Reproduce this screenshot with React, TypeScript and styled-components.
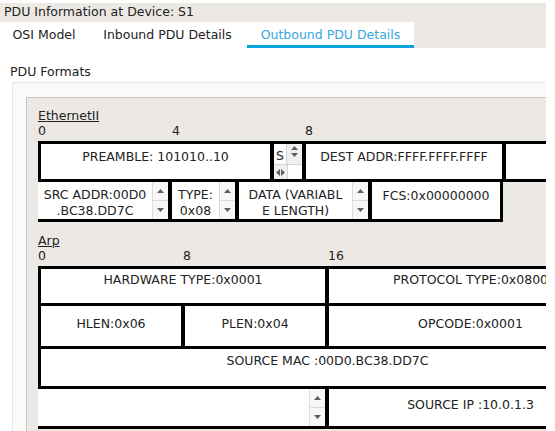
import React from 'react';
import styled, { createGlobalStyle } from 'styled-components';

const GlobalStyle = createGlobalStyle`
  html, body {
    margin: 0;
    padding: 0;
    background: #fff;
  }
  body {
    font-family: "DejaVu Sans", "Liberation Sans", sans-serif;
    font-size: 12.5px;
    color: #222;
  }
`;

const Window = styled.div`
  width: 546px;
  height: 431px;
  overflow: hidden;
  display: flex;
  flex-direction: column;
`;

const TitleBar = styled.div`
  margin-top: 3px;
  height: 19px;
  line-height: 18px;
  padding-left: 4px;
  background: #ece9e5;
  white-space: nowrap;
`;

const TabBar = styled.div`
  display: flex;
  height: 26px;
  background: #ece9e5;
`;

const Tab = styled.div<{ $w: number; $active?: boolean }>`
  width: ${p => p.$w}px;
  flex: none;
  line-height: 26px;
  text-align: center;
  white-space: nowrap;
  background: #fff;
  color: ${p => (p.$active ? '#35a7e0' : '#222')};
  box-shadow: ${p => (p.$active ? 'inset 0 -3px 0 #0aa2dc' : 'none')};
`;

const Content = styled.div`
  flex: 1;
  min-height: 0;
  display: flex;
  flex-direction: column;
  padding-top: 16px;
  background: #fff;
`;

const FormatsLabel = styled.div`
  margin-left: 10px;
  line-height: 15px;
`;

const ScrollBox = styled.div`
  flex: 1;
  margin: 3px 0 0 12px;
  padding: 14px 0 0 13px;
  background: #fafafa;
  border-top: 1px solid #e6e6e6;
  border-left: 1px solid #e8e8e8;
  overflow: hidden;
`;

const Panel = styled.div`
  height: 100%;
  width: max-content;
  min-width: 100%;
  box-sizing: border-box;
  padding: 10px 0 0 11px;
  background: #ece9e5;
  border-top: 1px solid #c8c4bf;
  border-left: 1px solid #c8c4bf;
`;

const SectionLabel = styled.div<{ $gap?: number }>`
  margin-top: ${p => p.$gap ?? 0}px;
  line-height: 15px;
  text-decoration: underline;
`;

const Ruler = styled.div`
  display: flex;
  line-height: 15px;
  margin-bottom: 3px;
`;

const Mark = styled.span<{ $w: number }>`
  width: ${p => p.$w}px;
  flex: none;
`;

const Table = styled.div`
  border-top: 3px solid #000;
  width: max-content;
`;

const Row = styled.div<{ $top?: boolean; $left?: boolean; $right?: boolean; $h: number }>`
  display: flex;
  gap: 4px;
  width: max-content;
  height: ${p => p.$h}px;
  background: #000;
  border-top: ${p => (p.$top ? '3px solid #000' : 'none')};
  border-left: ${p => (p.$left ? '3px solid #000' : 'none')};
  border-right: ${p => (p.$right ? '3px solid #000' : 'none')};
  border-bottom: 3px solid #000;
`;

const Cell = styled.div<{ $w: number }>`
  width: ${p => p.$w}px;
  flex: none;
  display: flex;
  background: #fff;
  overflow: hidden;
`;

const CellText = styled.div<{ $pt: number; $lh: number }>`
  flex: 1;
  min-width: 0;
  padding-top: ${p => p.$pt}px;
  line-height: ${p => p.$lh}px;
  text-align: center;
  white-space: nowrap;
`;

const Spin = styled.div`
  width: 15px;
  flex: none;
  display: flex;
  flex-direction: column;
  background: #f7f7f7;
  border-left: 1px solid #dcdcdc;
`;

const SpinButton = styled.div`
  flex: 1;
  display: flex;
  align-items: center;
  justify-content: center;
  & + & {
    border-top: 1px solid #dcdcdc;
  }
`;

const ScrollCell = styled(Cell)`
  flex-direction: column;
`;

const ScrollTop = styled.div`
  flex: 1;
  display: flex;
`;

const ScrollBottom = styled.div`
  height: 16px;
  display: flex;
  flex: none;
`;

const ClippedText = styled.div`
  flex: 1;
  padding: 3px 0 0 2px;
  line-height: 17px;
  overflow: hidden;
`;

const VBar = styled.div`
  width: 15px;
  flex: none;
  display: flex;
  flex-direction: column;
  align-items: center;
  padding-top: 2px;
  gap: 3px;
  background: #f0f0f0;
  border-left: 1px solid #d4d4d4;
`;

const HBar = styled.div`
  flex: 1;
  display: flex;
  align-items: center;
  padding-left: 2px;
  gap: 1px;
  background: #f0f0f0;
  border-top: 1px solid #d4d4d4;
`;

const Corner = styled.div`
  width: 14px;
  flex: none;
  background: #fff;
  border-top: 1px solid #d4d4d4;
  border-left: 1px solid #d4d4d4;
`;

type Dir = 'up' | 'down' | 'left' | 'right';

const Arrow: React.FC<{ dir: Dir }> = ({ dir }) => {
  const pts: Record<Dir, string> = {
    up: '0,4 3.5,0 7,4',
    down: '0,0 7,0 3.5,4',
    left: '4,0 4,7 0,3.5',
    right: '0,0 4,3.5 0,7',
  };
  const vertical = dir === 'up' || dir === 'down';
  return (
    <svg width={vertical ? 7 : 4} height={vertical ? 4 : 7} viewBox={vertical ? '0 0 7 4' : '0 0 4 7'}>
      <polygon points={pts[dir]} fill="#5e5e5e" />
    </svg>
  );
};

const Spinner: React.FC = () => (
  <Spin>
    <SpinButton>
      <Arrow dir="up" />
    </SpinButton>
    <SpinButton>
      <Arrow dir="down" />
    </SpinButton>
  </Spin>
);

const Field: React.FC<{ w: number; pt: number; lh?: number; spin?: boolean; children?: React.ReactNode }> = ({
  w,
  pt,
  lh = 17,
  spin,
  children,
}) => (
  <Cell $w={w}>
    <CellText $pt={pt} $lh={lh}>
      {children}
    </CellText>
    {spin && <Spinner />}
  </Cell>
);

const App: React.FC = () => (
  <>
    <GlobalStyle />
    <Window>
      <TitleBar>PDU Information at Device: S1</TitleBar>
      <TabBar>
        <Tab $w={88}>OSI Model</Tab>
        <Tab $w={159}>Inbound PDU Details</Tab>
        <Tab $w={167} $active>
          Outbound PDU Details
        </Tab>
      </TabBar>
      <Content>
        <FormatsLabel>PDU Formats</FormatsLabel>
        <ScrollBox>
          <Panel>
            <SectionLabel>EthernetII</SectionLabel>
            <Ruler>
              <Mark $w={134}>0</Mark>
              <Mark $w={133}>4</Mark>
              <Mark $w={20}>8</Mark>
            </Ruler>
            <Row $top $left $h={35}>
              <Field w={229} pt={4}>
                PREAMBLE: 101010..10
              </Field>
              <ScrollCell $w={28}>
                <ScrollTop>
                  <ClippedText>S</ClippedText>
                  <VBar>
                    <Arrow dir="up" />
                    <Arrow dir="down" />
                  </VBar>
                </ScrollTop>
                <ScrollBottom>
                  <HBar>
                    <Arrow dir="left" />
                    <Arrow dir="right" />
                  </HBar>
                  <Corner />
                </ScrollBottom>
              </ScrollCell>
              <Field w={196} pt={4}>
                DEST ADDR:FFFF.FFFF.FFFF
              </Field>
              <Field w={60} pt={4} />
            </Row>
            <Row $right $h={37}>
              <Field w={130} pt={5} lh={16} spin>
                SRC ADDR:00D0
                <br />
                .BC38.DD7C
              </Field>
              <Field w={63} pt={5} lh={16} spin>
                TYPE:
                <br />
                0x08
              </Field>
              <Field w={129} pt={5} lh={16} spin>
                DATA (VARIABL
                <br />E LENGTH)
              </Field>
              <Field w={128} pt={6} lh={16}>
                FCS:0x00000000
              </Field>
            </Row>

            <SectionLabel $gap={11}>Arp</SectionLabel>
            <Ruler>
              <Mark $w={145}>0</Mark>
              <Mark $w={145}>8</Mark>
              <Mark $w={20}>16</Mark>
            </Ruler>
            <Table>
              <Row $left $h={34}>
                <Field w={284} pt={2}>
                  HARDWARE TYPE:0x0001
                </Field>
                <Field w={283} pt={2}>
                  PROTOCOL TYPE:0x0800
                </Field>
              </Row>
              <Row $left $h={40}>
                <Field w={140} pt={9}>
                  HLEN:0x06
                </Field>
                <Field w={140} pt={9}>
                  PLEN:0x04
                </Field>
                <Field w={283} pt={9}>
                  OPCODE:0x0001
                </Field>
              </Row>
              <Row $left $h={37}>
                <Field w={573} pt={3}>
                  SOURCE MAC :00D0.BC38.DD7C
                </Field>
              </Row>
              <Row $h={37}>
                <Field w={287} pt={7} spin />
                <Field w={283} pt={7}>
                  SOURCE IP :10.0.1.3
                </Field>
              </Row>
            </Table>
          </Panel>
        </ScrollBox>
      </Content>
    </Window>
  </>
);

export default App;
